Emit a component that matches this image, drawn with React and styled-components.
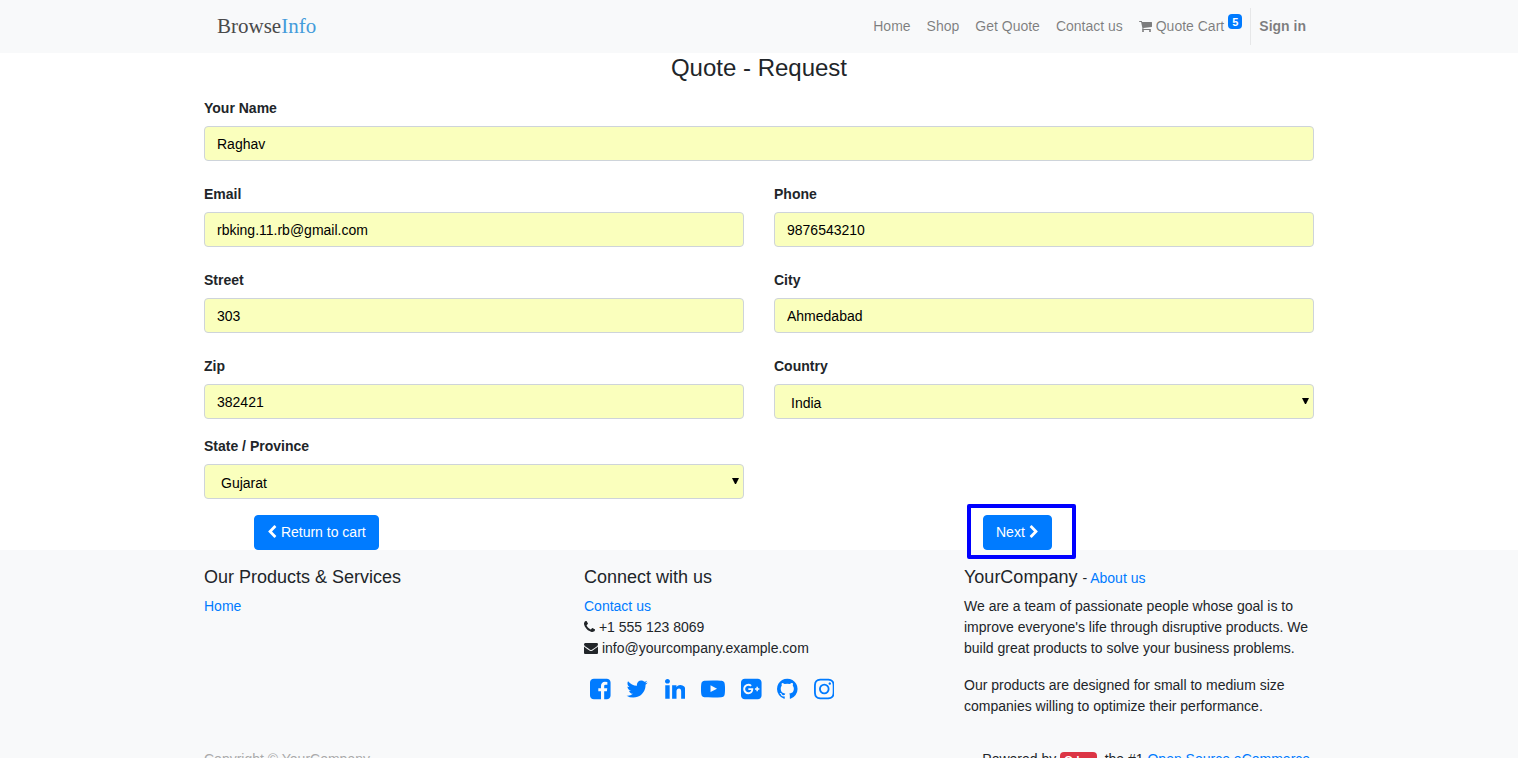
import React from "react";
import styled, { createGlobalStyle, css } from "styled-components";

const GlobalStyle = createGlobalStyle`
  *, *::before, *::after { box-sizing: border-box; }
  body {
    margin: 0;
    background: #fff;
    color: #212529;
    font: 400 14px/21px "Liberation Sans", Arial, sans-serif;
  }
`;

const Page = styled.div`
  display: flex;
  flex-direction: column;
  height: 100vh;
  overflow-y: auto;
  scrollbar-width: none;
`;

const Container = styled.div`
  width: 100%;
  max-width: 1140px;
  margin: 0 auto;
  padding: 0 15px;
`;

const Link = styled.a`
  color: #007bff;
  text-decoration: none;
`;

/* Header */
const Header = styled.header`
  flex: none;
  padding: 8px 0;
  background: #f8f9fa;
`;

const HeaderBar = styled(Container)`
  display: flex;
  align-items: center;
  justify-content: space-between;
`;

const Logo = styled.a`
  margin-left: 13px;
  padding-bottom: 2px;
  color: #4a4a4a;
  font: 21px/24px "Liberation Serif", "Times New Roman", serif;
  text-decoration: none;
`;

const LogoAccent = styled.span`
  color: #459cdb;
`;

const Nav = styled.nav`
  display: flex;
`;

const NavLink = styled.a`
  display: flex;
  padding: 8px;
  color: rgba(0, 0, 0, 0.5);
  text-decoration: none;
  ${(p) =>
    p.$account &&
    css`
      border-left: 1px solid #e6e7e8;
      font-weight: 700;
    `}
`;

const CartCount = styled.span`
  height: 15px;
  margin: -2px 0 0 4px;
  padding: 0 4px;
  border-radius: 4px;
  background: #007bff;
  color: #fff;
  font-size: 11px;
  font-weight: 700;
  line-height: 16px;
`;

/* Icons */
const Svg = styled.svg`
  width: auto;
  height: ${(p) => (p.$large ? 24 : 14)}px;
  vertical-align: ${(p) => (p.$large ? -3 : -2)}px;
  fill: currentColor;
`;

const icons = {
  cart: [64, 1664, "M704 1536q0 52-38 90t-90 38-90-38-38-90 38-90 90-38 90 38 38 90zm896 0q0 52-38 90t-90 38-90-38-38-90 38-90 90-38 90 38 38 90zm128-1088v512q0 24-16.500 42.500t-40.500 21.500l-1044 122q13 60 13 70 0 16-24 64h920q26 0 45 19t19 45-19 45-45 19h-1024q-26 0-45-19t-19-45q0-11 8-31.500t16-36 21.500-40 15.500-29.500l-177-823h-204q-26 0-45-19t-19-45 19-45 45-19h256q16 0 28.500 6.500t19.500 15.500 13 24.500 8 26 5.500 29.500 4.500 26h1201q26 0 45 19t19 45z"],
  phone: [192, 1408, "M1600 1240q0 27-10 70.500t-21 68.500q-21 50-122 106-94 51-186 51-27 0-53-3.500t-57.500-12.500-47-14.500-55.500-20.500-49-18q-98-35-175-83-127-79-264-216t-216-264q-48-77-83-175-3-9-18-49t-20.500-55.500-14.500-47-12.500-57.500-3.500-53q0-92 51-186 56-101 106-122 25-11 68.500-21t70.500-10q14 0 21 3 18 6 53 76 11 19 30 54t35 63.500 31 53.500q3 4 17.500 25t21.500 35.500 7 28.500q0 20-28.500 50t-62 55-62 53-28.500 46q0 9 5 22.500t8.500 20.500 14 24 11.500 19q76 137 174 235t235 174q2 1 19 11.500t24 14 20.500 8.500 22.500 5q18 0 46-28.500t53-62 55-62 50-28.500q14 0 28.500 7t35.500 21.500 25 17.500q25 15 53.500 31t63.500 35 54 30q70 35 76 53 3 7 3 21z"],
  envelope: [0, 1792, "M1792 710v794q0 66-47 113t-113 47h-1472q-66 0-113-47t-47-113v-794q44 49 101 87 362 246 497 345 57 42 92.500 65.500t94.500 48 110 24.500h2q51 0 110-24.500t94.500-48 92.500-65.500q170-123 498-345 57-39 100-87zm0-294q0 79-49 151t-122 123q-376 261-468 325-10 7-42.500 30.500t-54 38-52 32.500-57.500 27-50 9h-2q-23 0-50-9t-57.500-27-52-32.500-54-38-42.500-30.500q-91-64-262-182.500t-205-142.500q-62-42-117-115.500t-55-136.500q0-78 41.500-130t118.500-52h1472q65 0 112.500 47t47.500 113z"],
  chevronLeft: [256, 1280, "M1427 301l-531 531 531 531q19 19 19 45t-19 45l-166 166q-19 19-45 19t-45-19l-742-742q-19-19-19-45t19-45l742-742q19-19 45-19t45 19l166 166q19 19 19 45t-19 45z"],
  chevronRight: [256, 1280, "M1363 877l-742 742q-19 19-45 19t-45-19l-166-166q-19-19-19-45t19-45l531-531-531-531q-19-19-19-45t19-45l166-166q19-19 45-19t45 19l742 742q19 19 19 45t-19 45z"],
  facebook: [128, 1536, "M1376 128q119 0 203.500 84.500t84.500 203.500v960q0 119-84.500 203.500t-203.500 84.500h-188v-595h199l30-232h-229v-148q0-56 23.500-84t91.500-28l122-1v-207q-63-9-178-9-136 0-217.500 80t-81.500 226v171h-200v232h200v595h-532q-119 0-203.500-84.500t-84.500-203.500v-960q0-119 84.500-203.500t203.500-84.500h960z"],
  twitter: [64, 1664, "M1684 408q-67 98-162 167 1 14 1 42 0 130-38 259.500t-115.500 248.500-184.500 210.500-258 146-323 54.500q-271 0-496-145 35 4 78 4 225 0 401-138-105-2-188-64.500t-114-159.500q33 5 61 5 43 0 85-11-112-23-185.500-111.500t-73.500-205.500v-4q68 38 146 41-66-44-105-115t-39-154q0-88 44-163 121 149 294.500 238.500t371.500 99.500q-8-38-8-74 0-134 94.500-228.500t228.500-94.500q140 0 236 102 109-21 205-78-37 115-142 178 93-10 186-50z"],
  linkedin: [128, 1536, "M477 625v991h-330v-991h330zm21-306q1 73-50.500 122t-135.500 49h-2q-82 0-132-49t-50-122q0-74 51.500-122.500t134.500-48.500 133 48.500 51 122.500zm1166 729v568h-329v-530q0-105-40.500-164.500t-126.500-59.500q-63 0-105.500 34.500t-63.500 85.500q-11 30-11 81v553h-329q2-399 2-647t-1-296l-1-48h329v144h-2q20-32 41-56t56.500-52 87-43.500 114.500-15.500q171 0 275 113.500t104 332.500z"],
  youtube: [0, 1792, "M711 1128l484-250-484-253v503zm185-862q168 0 324.500 4.500t229.500 9.500l73 4q1 0 17 1.500t23 3 23.500 4.500 28.500 8 28 13 31 19.500 29 26.500q6 6 15.500 18.500t29 58.500 26.500 101q8 64 12.500 136.500t5.500 113.500v176q1 145-18 290-7 55-25 99.500t-32 61.500l-14 17q-14 15-29 26.500t-31 19-28 12.500-28.500 8-24 4.500-23 3-16.500 1.500q-251 19-627 19-207-2-359.500-6.500t-200.500-7.500l-49-4-36-4q-36-5-54.500-10t-51-21-56.500-41q-6-6-15.500-18.500t-29-58.500-26.500-101q-8-64-12.500-136.500t-5.500-113.500v-176q-1-145 18-290 7-55 25-99.500t32-61.500l14-17q14-15 29-26.500t31-19.500 28-13 28.500-8 23.500-4.500 23-3 17-1.500q251-18 627-18z"],
  googlePlus: [128, 1536, "M1045 905q0-26-6-64h-362v132h217q-3 24-16.500 50t-37.500 53-66.500 44.500-96.500 17.500q-99 0-169-71t-70-171 70-171 169-71q92 0 153 59l104-101q-108-100-257-100-160 0-272 112.500t-112 271.500 112 271.500 272 112.500q165 0 266.500-105t101.500-270zm345 46h109v-110h-109v-110h-110v110h-110v110h110v110h110v-110zm274-535v960q0 119-84.500 203.500t-203.500 84.500h-960q-119 0-203.500-84.500t-84.500-203.500v-960q0-119 84.500-203.500t203.500-84.500h960q119 0 203.500 84.500t84.500 203.500z"],
  github: [128, 1536, "M896 128q209 0 385.500 103t279.500 279.500 103 385.500q0 251-146.500 451.500t-378.500 277.500q-27 5-40-7t-13-30q0-3 .5-76.500t.5-134.500q0-97-52-142 57-6 102.500-18t94-39 81-66.500 53-105 20.500-150.500q0-119-79-206 37-91-8-204-28-9-81 11t-92 44l-38 24q-93-26-192-26t-192 26q-16-11-42.500-27t-83.500-38.500-85-13.500q-45 113-8 204-79 87-79 206 0 85 20.500 150t52.500 105 80.500 67 94 39 102.500 18q-39 36-49 103-21 10-45 15t-57 5-65.500-21.500-55.500-62.500q-19-32-48.500-52t-49.500-24l-20-3q-21 0-29 4.500t-5 11.500 9 14 13 12l7 5q22 10 43.500 38t31.500 51l10 23q13 38 44 61.500t67 30 69.500 7 55.500-3.500l23-4q0 38 .5 88.500t.5 54.500q0 18-13 30t-40 7q-232-77-378.500-277.500t-146.500-451.500q0-209 103-385.500t279.500-279.500 385.500-103z"],
  instagram: [128, 1536, "M1152 896q0-106-75-181t-181-75-181 75-75 181 75 181 181 75 181-75 75-181zm138 0q0 164-115 279t-279 115-279-115-115-279 115-279 279-115 279 115 115 279zm108-410q0 38-27 65t-65 27-65-27-27-65 27-65 65-27 65 27 27 65zm-502-220q-7 0-76.500-.5t-105.500 0-96.500 3-103 10-71.500 18.500q-50 20-88 58t-58 88q-11 29-18.500 71.500t-10 103-3 96.500 0 105.500.5 76.500-.5 76.500 0 105.500 3 96.500 10 103 18.500 71.500q20 50 58 88t88 58q29 11 71.500 18.500t103 10 96.500 3 105.500 0 76.500-.5 76.500.5 105.500 0 96.500-3 103-10 71.500-18.500q50-20 88-58t58-88q11-29 18.500-71.500t10-103 3-96.500 0-105.500-.5-76.500.5-76.500 0-105.500-3-96.500-10-103-18.500-71.500q-20-50-58-88t-88-58q-29-11-71.500-18.500t-103-10-96.500-3-105.500 0-76.500.5zm768 630q0 229-5 317-10 208-124 322t-322 124q-88 5-317 5t-317-5q-208-10-322-124t-124-322q-5-88-5-317t5-317q10-208 124-322t322-124q88-5 317-5t317 5q208 10 322 124t124 322q5 88 5 317z"],
};

function Icon({ name, large }) {
  const [x, width, path] = icons[name];
  return (
    <Svg $large={large} viewBox={`${x} 0 ${width} 1792`} aria-hidden="true">
      <path d={path} />
    </Svg>
  );
}

/* Form */
const Title = styled.h1`
  margin: 0 0 15px;
  font-size: 24px;
  font-weight: 400;
  line-height: 30px;
  text-align: center;
`;

const Fields = styled.div`
  display: grid;
  grid-template-columns: 1fr 1fr;
  gap: 23px 30px;

  & + & {
    margin-top: 17px;
  }
`;

const FieldBox = styled.div`
  grid-column: ${(p) => (p.$wide ? "1 / -1" : "auto")};
`;

const Label = styled.label`
  display: block;
  margin-bottom: 7px;
  font-weight: 700;
`;

const control = css`
  display: block;
  width: 100%;
  height: 35px;
  border: 1px solid #ced4da;
  border-radius: 4px;
  background: #faffbd;
  color: #000;
  font: inherit;
`;

const Input = styled.input`
  ${control}
  padding: 6px 12px;
`;

const SelectBox = styled.div`
  position: relative;
`;

const Select = styled.select`
  ${control}
  padding: 8px 16px 6px;
  appearance: none;
`;

const Arrow = styled.svg`
  position: absolute;
  top: 14px;
  right: 5px;
  width: 7px;
  height: 6px;
  pointer-events: none;
`;

function TextField({ id, label, value, type = "text", wide }) {
  return (
    <FieldBox $wide={wide}>
      <Label htmlFor={id}>{label}</Label>
      <Input id={id} type={type} defaultValue={value} />
    </FieldBox>
  );
}

function SelectField({ id, label, value }) {
  return (
    <FieldBox>
      <Label htmlFor={id}>{label}</Label>
      <SelectBox>
        <Select id={id} defaultValue={value}>
          <option>{value}</option>
        </Select>
        <Arrow viewBox="0 0 7 6" aria-hidden="true">
          <path d="M0 0H7L4 6H3Z" />
        </Arrow>
      </SelectBox>
    </FieldBox>
  );
}

const Columns = styled.div`
  display: grid;
  grid-template-columns: repeat(3, 1fr);
  gap: 30px;
`;

const Actions = styled(Columns)`
  margin-top: 16px;
`;

const ActionCell = styled.div`
  display: flex;
  grid-column: ${(p) => p.$column};
  padding-left: ${(p) => p.$indent}px;
`;

const Button = styled.button`
  height: 35px;
  padding: 6px 12px;
  border: 1px solid #007bff;
  border-radius: 4px;
  background: #007bff;
  color: #fff;
  font: inherit;
  white-space: nowrap;
`;

const Highlight = styled.div`
  position: relative;

  &::after {
    content: "";
    position: absolute;
    z-index: 1;
    inset: -11px -24px -9px -16px;
    border: 4px solid #00f;
    border-radius: 2px;
    pointer-events: none;
  }
`;

/* Footer */
const Footer = styled.footer`
  flex: 1 0 auto;
  padding: 17px 0 16px;
  background: #f8f9fa;
`;

const FooterHeading = styled.h2`
  margin: 0 0 8px;
  font-size: 18px;
  font-weight: 400;
  line-height: 21px;
`;

const HeadingNote = styled.small`
  font-size: 14px;
  line-height: 14px;
`;

const Paragraph = styled.p`
  margin: 0 0 16px;
`;

const Lines = styled.div`
  display: flex;
  flex-direction: column;
  align-items: flex-start;
`;

const Social = styled.div`
  margin-top: 18px;
`;

const SocialLink = styled(Link)`
  padding: 0 6px;
`;

const Legal = styled.div`
  display: flex;
  justify-content: space-between;
  margin-top: 16px;
`;

const Copyright = styled.span`
  color: #aaa;
`;

const BrandBadge = styled(Link)`
  display: inline-block;
  padding: 0 4px;
  border-radius: 4px;
  background: #dc3545;
  color: #fff;
  font-size: 11px;
  font-weight: 700;
  line-height: 16px;
`;

const networks = [
  ["facebook", "Facebook"],
  ["twitter", "Twitter"],
  ["linkedin", "LinkedIn"],
  ["youtube", "YouTube"],
  ["googlePlus", "Google Plus"],
  ["github", "GitHub"],
  ["instagram", "Instagram"],
];

export default function App() {
  return (
    <>
      <GlobalStyle />
      <Page>
        <Header>
          <HeaderBar>
            <Logo href="#">
              Browse<LogoAccent>Info</LogoAccent>
            </Logo>
            <Nav>
              <NavLink href="#">Home</NavLink>
              <NavLink href="#">Shop</NavLink>
              <NavLink href="#">Get Quote</NavLink>
              <NavLink href="#">Contact us</NavLink>
              <NavLink href="#">
                <span>
                  <Icon name="cart" /> Quote Cart
                </span>
                <CartCount>5</CartCount>
              </NavLink>
              <NavLink href="#" $account>
                Sign in
              </NavLink>
            </Nav>
          </HeaderBar>
        </Header>

        <Container as="main">
          <Title>Quote - Request</Title>
          <form onSubmit={(e) => e.preventDefault()}>
            <Fields>
              <TextField wide id="name" label="Your Name" value="Raghav" />
              <TextField id="email" type="email" label="Email" value="rbking.11.rb@gmail.com" />
              <TextField id="phone" type="tel" label="Phone" value="9876543210" />
              <TextField id="street" label="Street" value="303" />
              <TextField id="city" label="City" value="Ahmedabad" />
              <TextField id="zip" label="Zip" value="382421" />
              <SelectField id="country" label="Country" value="India" />
            </Fields>
            <Fields>
              <SelectField id="state" label="State / Province" value="Gujarat" />
            </Fields>
            <Actions>
              <ActionCell $column={1} $indent={50}>
                <Button type="button">
                  <Icon name="chevronLeft" /> Return to cart
                </Button>
              </ActionCell>
              <ActionCell $column={3} $indent={19}>
                <Highlight>
                  <Button type="submit">
                    Next <Icon name="chevronRight" />
                  </Button>
                </Highlight>
              </ActionCell>
            </Actions>
          </form>
        </Container>

        <Footer>
          <Container>
            <Columns>
              <div>
                <FooterHeading>Our Products &amp; Services</FooterHeading>
                <Link href="#">Home</Link>
              </div>
              <div>
                <FooterHeading>Connect with us</FooterHeading>
                <Lines>
                  <Link href="#">Contact us</Link>
                  <span>
                    <Icon name="phone" /> +1 555 123 8069
                  </span>
                  <span>
                    <Icon name="envelope" /> info@yourcompany.example.com
                  </span>
                </Lines>
                <Social>
                  {networks.map(([name, label]) => (
                    <React.Fragment key={name}>
                      <SocialLink href="#" aria-label={label}>
                        <Icon name={name} large />
                      </SocialLink>{" "}
                    </React.Fragment>
                  ))}
                </Social>
              </div>
              <div>
                <FooterHeading>
                  YourCompany{" "}
                  <HeadingNote>
                    - <Link href="#">About us</Link>
                  </HeadingNote>
                </FooterHeading>
                <Paragraph>
                  We are a team of passionate people whose goal is to improve everyone's life
                  through disruptive products. We build great products to solve your business
                  problems.
                </Paragraph>
                <Paragraph>
                  Our products are designed for small to medium size companies willing to
                  optimize their performance.
                </Paragraph>
              </div>
            </Columns>
            <Legal>
              <Copyright>Copyright © YourCompany</Copyright>
              <span>
                Powered by <BrandBadge href="#">Odoo</BrandBadge>, the #1{" "}
                <Link href="#">Open Source eCommerce</Link>.
              </span>
            </Legal>
          </Container>
        </Footer>
      </Page>
    </>
  );
}
